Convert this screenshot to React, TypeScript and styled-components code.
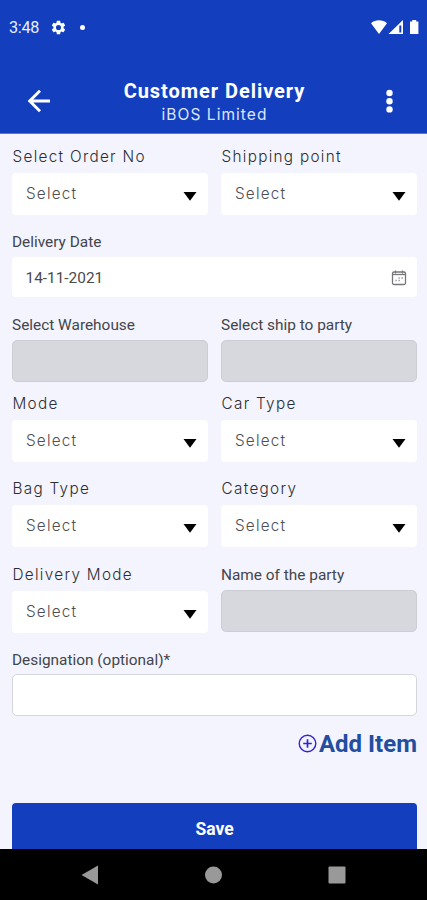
import React from "react";
import styled, { createGlobalStyle } from "styled-components";

const GlobalStyle = createGlobalStyle`
  * { box-sizing: border-box; }
  body { margin: 0; background: #f3f4fd; font-family: Roboto, "Liberation Sans", sans-serif; }
  button { font-family: inherit; border: 0; padding: 0; background: none; }
  svg { display: block; flex: none; }
`;

const Screen = styled.div`
  width: 427px;
  height: 900px;
  display: flex;
  flex-direction: column;
  overflow: hidden;
  background: #f3f4fd;
`;

const TopArea = styled.header`
  flex: none;
  height: 134px;
  background: #133fbf;
  color: #fff;
  border-bottom: 1px solid #5d78d2;
`;

const StatusBar = styled.div`
  height: 54px;
  display: flex;
  align-items: center;
  justify-content: space-between;
  padding: 0 7px 0 9px;
`;

const StatusGroup = styled.div<{ $gap: number }>`
  display: flex;
  align-items: center;
  gap: ${(p) => p.$gap}px;
`;

const Clock = styled.span`
  width: 30px;
  font-size: 16.2px;
  line-height: 20px;
  letter-spacing: -0.3px;
  color: #e9edfb;
  padding-top: 2px;
`;

const Dot = styled.span`
  width: 5px;
  height: 5px;
  margin-left: 2px;
  border-radius: 50%;
  background: #fff;
`;

const AppBar = styled.div`
  height: 79px;
  display: grid;
  grid-template-columns: 77px 1fr 75px;
  padding-top: 25px;
`;

const BarButton = styled.button`
  height: 44px;
  display: flex;
  align-items: center;
  justify-content: center;
  color: #fff;
`;

const Titles = styled.div`
  text-align: center;
`;

const Title = styled.h1`
  margin: 0;
  font-size: 20px;
  line-height: 24px;
  font-weight: 700;
  letter-spacing: 0.95px;
`;

const Subtitle = styled.div`
  font-family: Inter, Roboto, sans-serif;
  font-size: 15.5px;
  line-height: 24px;
  letter-spacing: 1.05px;
  color: #dfe5f9;
`;

const Form = styled.main`
  flex: 1;
  min-height: 0;
  overflow: hidden;
  padding: 0 10px 0 12px;
  display: flex;
  flex-direction: column;
`;

const Row = styled.div<{ $top: number; $cols?: number }>`
  flex: none;
  display: grid;
  grid-template-columns: repeat(${(p) => p.$cols ?? 2}, 1fr);
  column-gap: 13px;
  margin-top: ${(p) => p.$top}px;
`;

const Field = styled.div`
  min-width: 0;
`;

const Label = styled.label<{ $gap: number }>`
  display: block;
  height: 18px;
  line-height: 18px;
  white-space: nowrap;
  font-size: 15.4px;
  font-weight: 400;
  color: #44454b;
  margin-bottom: ${(p) => p.$gap}px;
`;

const WideLabel = styled(Label)`
  font-family: Inter, Roboto, sans-serif;
  font-size: 15.3px;
  font-weight: 300;
  letter-spacing: 1.3px;
  color: #2c2d33;
  padding-left: 0.5px;
`;

const SelectBox = styled.div`
  height: 42px;
  display: flex;
  align-items: center;
  justify-content: space-between;
  padding: 0 11px 1px 14px;
  border-radius: 4px;
  background: #fff;
  color: #4d4d52;
  font-family: Inter, Roboto, sans-serif;
  font-size: 15.3px;
  font-weight: 300;
  letter-spacing: 1.2px;
`;

const DateBox = styled(SelectBox)`
  height: 40px;
  padding: 2px 10px 0 13.5px;
  color: #4a4a4d;
  font-family: Roboto, sans-serif;
  font-size: 15.4px;
  font-weight: 400;
  letter-spacing: 0;
`;

const DisabledBox = styled.div`
  height: 42px;
  border-radius: 5px;
  border: 1px solid #cdced3;
  background: #d7d8dd;
`;

const InputBox = styled.div`
  height: 42px;
  border-radius: 5px;
  border: 1.5px solid #d5d6dc;
  background: #fff;
`;

const AddItem = styled.button`
  align-self: flex-end;
  display: flex;
  align-items: center;
  gap: 2px;
  height: 30px;
  margin-top: 13px;
  color: #234d9f;
  font-size: 24px;
  font-weight: 700;
  line-height: 30px;
`;

const PlusSlot = styled.span`
  padding-bottom: 1px;
`;

const SaveButton = styled.button`
  flex: none;
  height: 52px;
  margin-top: 44px;
  border-radius: 4px;
  background: #133fbf;
  color: #fff;
  font-size: 17.5px;
  font-weight: 700;
  line-height: 51px;
`;

const NavBar = styled.nav`
  flex: none;
  height: 51px;
  display: flex;
  align-items: center;
  justify-content: space-between;
  padding: 0 81px;
  background: #000;
`;

const Caret = () => (
  <svg width="14" height="9" viewBox="0 0 14 9">
    <path d="M.5 0h13L7 8.8z" fill="#000" />
  </svg>
);

const CaretSlot = styled.span`
  padding-top: 6px;
`;

function SelectField({ label }: { label: string }) {
  return (
    <Field>
      <WideLabel $gap={7}>{label}</WideLabel>
      <SelectBox>
        Select
        <CaretSlot><Caret /></CaretSlot>
      </SelectBox>
    </Field>
  );
}

function DisabledField({ label }: { label: string }) {
  return (
    <Field>
      <Label $gap={6}>{label}</Label>
      <DisabledBox />
    </Field>
  );
}

const GearIcon = () => (
  <svg width="17" height="17" viewBox="0 0 24 24" fill="#fff">
    <path d="M19.14 12.94c.04-.3.06-.61.06-.94s-.02-.64-.07-.94l2.03-1.58a.49.49 0 0 0 .12-.61l-1.92-3.32a.49.49 0 0 0-.59-.22l-2.39.96c-.5-.38-1.03-.7-1.62-.94l-.36-2.54a.48.48 0 0 0-.48-.41h-3.84a.47.47 0 0 0-.47.41l-.36 2.54c-.59.24-1.13.57-1.62.94l-2.39-.96a.47.47 0 0 0-.59.22L2.74 8.87a.47.47 0 0 0 .12.61l2.03 1.58c-.05.3-.09.63-.09.94s.02.64.07.94l-2.03 1.58a.49.49 0 0 0-.12.61l1.92 3.32c.12.22.37.29.59.22l2.39-.96c.5.38 1.03.7 1.62.94l.36 2.54c.05.24.24.41.48.41h3.84c.24 0 .44-.17.47-.41l.36-2.54c.59-.24 1.13-.56 1.62-.94l2.39.96c.22.08.47 0 .59-.22l1.92-3.32a.47.47 0 0 0-.12-.61zM12 15.6A3.6 3.6 0 1 1 12 8.4a3.6 3.6 0 0 1 0 7.2z" />
  </svg>
);

const StatusIcons = () => (
  <svg width="50" height="16" viewBox="0 0 50 16" fill="#fff">
    <path d="M1 4.2C5.500.4 12.500.4 17 4.200L9 15z" />
    <path d="M33 1v14H18.500z" />
    <path d="M29.300 6.500h2v7h-2z" fill="#133fbf" />
    <path d="M40 2.500h2.200V1h4v1.500h2.200V15H40z" />
  </svg>
);

const BackIcon = () => (
  <svg width="24" height="24" viewBox="0 0 24 24" fill="none" stroke="#fff" strokeWidth="2.900">
    <path d="M23 12H2.800M13 1.700 2.700 12 13 22.300" />
  </svg>
);

const MoreIcon = () => (
  <svg width="8" height="24" viewBox="0 0 8 24" fill="#fff">
    <circle cx="3.500" cy="4" r="3.200" />
    <circle cx="3.500" cy="12.200" r="3.200" />
    <circle cx="3.500" cy="20.400" r="3.200" />
  </svg>
);

const CalendarIcon = () => (
  <svg width="16" height="16" viewBox="0 0 16 16" fill="none" stroke="#77777a">
    <rect x="1.500" y="2" width="13" height="12.500" rx="1.500" strokeWidth="1.300" />
    <path d="M1.500 4.500h13" strokeWidth="1.300" />
    <path d="M4.500.5v3M11.500.5v3" strokeWidth="1.200" />
    <path d="M7.500 8h1.200M10.500 8h1.200M4.500 10.500h1.200M7.500 10.500h1.200" strokeWidth="1.300" stroke="#88888b" />
  </svg>
);

const PlusCircle = () => (
  <svg width="19" height="19" viewBox="0 0 19 19" fill="none" stroke="#3421df" strokeWidth="1.400">
    <circle cx="9.500" cy="9.500" r="8.300" />
    <path d="M9.500 5.200v8.600M5.200 9.500h8.600" strokeWidth="1.700" />
  </svg>
);

export default function App() {
  return (
    <>
      <GlobalStyle />
      <Screen>
        <TopArea>
          <StatusBar>
            <StatusGroup $gap={11}>
              <Clock>3:48</Clock>
              <GearIcon />
              <Dot />
            </StatusGroup>
            <StatusIcons />
          </StatusBar>
          <AppBar>
            <BarButton aria-label="Back"><BackIcon /></BarButton>
            <Titles>
              <Title>Customer Delivery</Title>
              <Subtitle>iBOS Limited</Subtitle>
            </Titles>
            <BarButton aria-label="More"><MoreIcon /></BarButton>
          </AppBar>
        </TopArea>
        <Form>
          <Row $top={14}>
            <SelectField label="Select Order No" />
            <SelectField label="Shipping point" />
          </Row>
          <Row $top={18} $cols={1}>
            <Field>
              <Label $gap={6}>Delivery Date</Label>
              <DateBox>
                14-11-2021
                <CalendarIcon />
              </DateBox>
            </Field>
          </Row>
          <Row $top={19}>
            <DisabledField label="Select Warehouse" />
            <DisabledField label="Select ship to party" />
          </Row>
          <Row $top={13}>
            <SelectField label="Mode" />
            <SelectField label="Car Type" />
          </Row>
          <Row $top={18}>
            <SelectField label="Bag Type" />
            <SelectField label="Category" />
          </Row>
          <Row $top={19}>
            <SelectField label="Delivery Mode" />
            <DisabledField label="Name of the party" />
          </Row>
          <Row $top={18} $cols={1}>
            <Field>
              <Label $gap={5}>Designation (optional)*</Label>
              <InputBox />
            </Field>
          </Row>
          <AddItem><PlusSlot><PlusCircle /></PlusSlot>Add Item</AddItem>
          <SaveButton>Save</SaveButton>
        </Form>
        <NavBar>
          <svg width="17" height="20" viewBox="0 0 17 20"><path d="M.5 10 17 .5v19z" fill="#999" /></svg>
          <svg width="18" height="18" viewBox="0 0 18 18"><circle cx="9.500" cy="9" r="8.500" fill="#999" /></svg>
          <svg width="18" height="18" viewBox="0 0 18 18"><rect x=".5" y=".5" width="17" height="17" rx="1" fill="#999" /></svg>
        </NavBar>
      </Screen>
    </>
  );
}
